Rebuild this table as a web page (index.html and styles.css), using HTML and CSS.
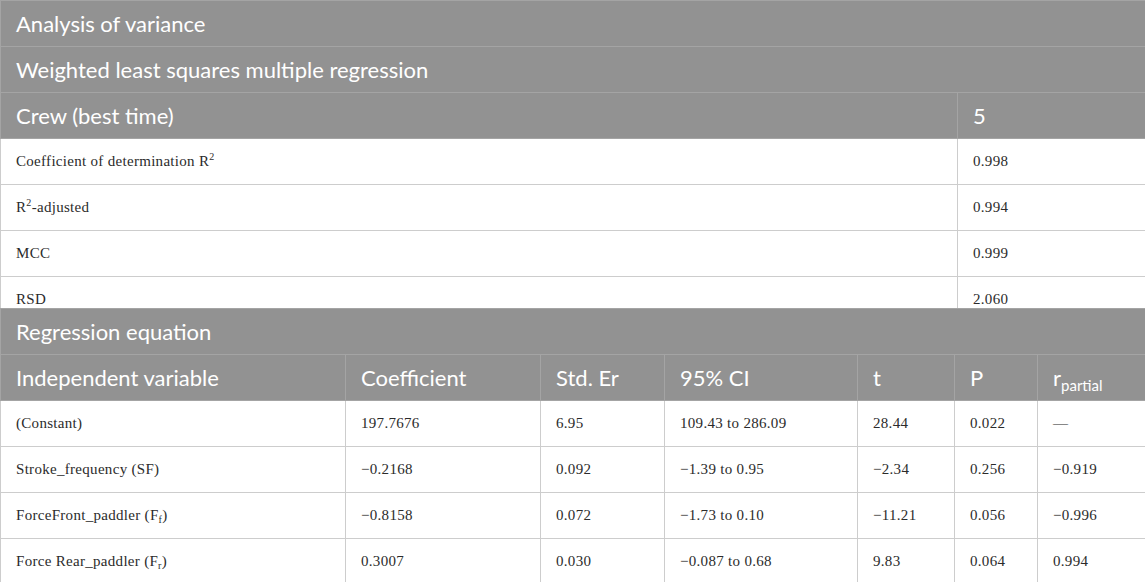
FILE: index.html
```html
<!DOCTYPE html>
<html>
<head>
<meta charset="utf-8">
<link rel="stylesheet" href="styles.css">
</head>
<body>
<div class="clip">
<table class="grid t1">
  <colgroup><col class="c-main"><col class="c-val"></colgroup>
  <tr class="head"><td colspan="2">Analysis of variance</td></tr>
  <tr class="head"><td colspan="2">Weighted least squares multiple regression</td></tr>
  <tr class="head"><td>Crew (best time)</td><td>5</td></tr>
  <tr><td>Coefficient of determination R<sup>2</sup></td><td>0.998</td></tr>
  <tr><td>R<sup>2</sup>-adjusted</td><td>0.994</td></tr>
  <tr><td>MCC</td><td>0.999</td></tr>
  <tr><td>RSD</td><td>2.060</td></tr>
</table>
</div>
<table class="grid t2">
  <colgroup>
    <col class="w1"><col class="w2"><col class="w3"><col class="w4"><col class="w5"><col class="w6"><col class="w7">
  </colgroup>
  <tr class="head"><td colspan="7">Regression equation</td></tr>
  <tr class="head"><td>Independent variable</td><td>Coefficient</td><td>Std. Er</td><td>95% CI</td><td>t</td><td>P</td><td>r<sub>partial</sub></td></tr>
  <tr><td>(Constant)</td><td>197.7676</td><td>6.95</td><td>109.43 to 286.09</td><td>28.44</td><td>0.022</td><td>—</td></tr>
  <tr><td>Stroke_frequency (SF)</td><td>−0.2168</td><td>0.092</td><td>−1.39 to 0.95</td><td>−2.34</td><td>0.256</td><td>−0.919</td></tr>
  <tr><td>ForceFront_paddler (F<sub>f</sub>)</td><td>−0.8158</td><td>0.072</td><td>−1.73 to 0.10</td><td>−11.21</td><td>0.056</td><td>−0.996</td></tr>
  <tr><td>Force Rear_paddler (F<sub>r</sub>)</td><td>0.3007</td><td>0.030</td><td>−0.087 to 0.68</td><td>9.83</td><td>0.064</td><td>0.994</td></tr>
</table>
</body>
</html>
```

FILE: styles.css
```css
html, body {
  margin: 0;
  padding: 0;
  background: #ffffff;
}
body {
  width: 1145px;
  height: 582px;
  overflow: hidden;
}
.clip {
  height: 308px;
  overflow: hidden;
}
.grid {
  width: 1145px;
  border-collapse: collapse;
  table-layout: fixed;
}
.grid td {
  height: 46px;
  box-sizing: border-box;
  padding: 0 15px;
  border: 1px solid #cdcdcd;
  font-family: "Liberation Serif", "Times New Roman", serif;
  font-size: 15px;
  letter-spacing: 0.3px;
  color: #2b2b2b;
  vertical-align: middle;
  white-space: nowrap;
}
.grid tr.head td {
  background: #929292;
  border-color: #a4a4a4;
  color: #ffffff;
  font-family: "Lato", "Open Sans", sans-serif;
  font-size: 22px;
  letter-spacing: 0;
}
.grid sup {
  font-size: 10px;
  vertical-align: 6px;
  line-height: 0;
}
.grid sub {
  font-size: 10px;
  vertical-align: -3px;
  line-height: 0;
}
.grid tr.head sub {
  font-size: 15px;
  vertical-align: -5px;
}
.c-main { width: 957px; }
.c-val { width: 188px; }
.w1 { width: 345px; }
.w2 { width: 195px; }
.w3 { width: 124px; }
.w4 { width: 193px; }
.w5 { width: 97px; }
.w6 { width: 83px; }
.w7 { width: 108px; }
```
